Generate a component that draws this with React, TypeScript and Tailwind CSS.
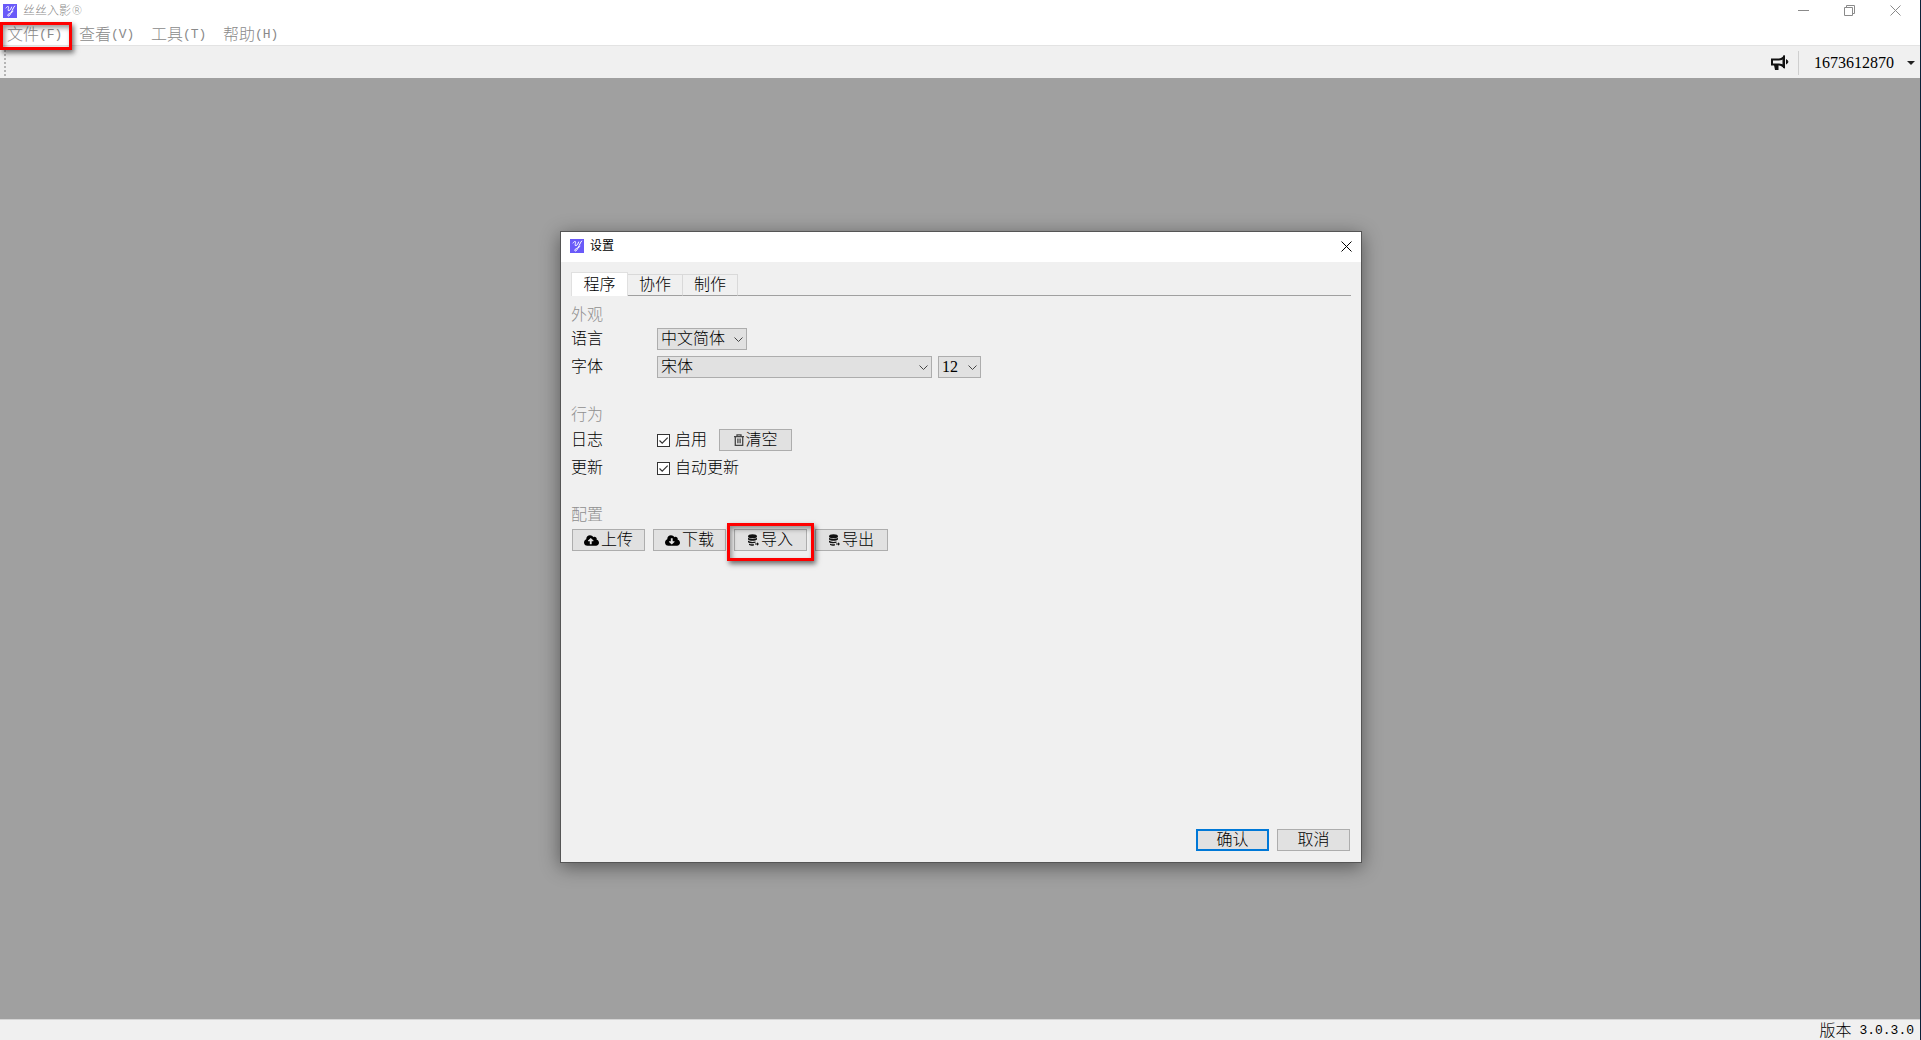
import type { ReactNode } from 'react'
import { FaCloudDownloadAlt, FaCloudUploadAlt } from 'react-icons/fa'

const menus = [
    { label: '文件', hotkey: '(F)', marked: true },
    { label: '查看', hotkey: '(V)' },
    { label: '工具', hotkey: '(T)' },
    { label: '帮助', hotkey: '(H)' },
]

function Logo() {
    return (
        <svg width="14" height="14" viewBox="0 0 14 14" fill="none" aria-hidden="true">
            <rect width="14" height="14" fill="#6a5af9" />
            <path d="M3 4C3.800 2.400 6 1.800 5.600 3.600S4.600 7 6 6.600S8 4.600 8.600 3" stroke="#fff" strokeWidth="1" strokeLinecap="round" />
            <path d="M11.600 2C9.800 4 8.300 9.500 6.400 11.600C5.200 12.700 4 11.400 5.200 10.300C6.500 9.200 8.500 8.800 10 7.400" stroke="#fff" strokeWidth="1" strokeLinecap="round" />
        </svg>
    )
}

function CloseIcon() {
    return (
        <svg width="11" height="11" viewBox="0 0 11 11" stroke="currentColor" aria-hidden="true">
            <path d="M.5.5l10 10M10.500.5l-10 10" />
        </svg>
    )
}

function Megaphone() {
    return (
        <svg width="18" height="16" viewBox="0 0 18 16" fill="none" stroke="#111" strokeWidth="2" aria-hidden="true">
            <path d="M1 4.500h7c2 0 3.500-1 4.500-2v9c-1-1-2.500-2-4.500-2H1z" />
            <path d="M3 10h4.500v5H4z" fill="#111" stroke="none" />
            <path d="M13 .5v12.500" />
            <path d="M15.500 4.700c1.800 1 1.800 3.200 0 4.200z" fill="#111" strokeWidth="1" />
        </svg>
    )
}

function Trash() {
    return (
        <svg width="10" height="12" viewBox="0 0 10 12" fill="none" stroke="#444" strokeWidth="1.300" aria-hidden="true">
            <path d="M0 2.600h10M3 2.500V.8h4v1.700M1.300 2.600v8.700h7.400V2.600M3.900 4.600v4.600M6.100 4.600v4.600" />
        </svg>
    )
}

function Database() {
    return (
        <svg width="11" height="12" viewBox="0 0 11 12" fill="#111" aria-hidden="true">
            <ellipse cx="4.500" cy="2.200" rx="4.500" ry="2" />
            <path d="M0 3.800c1.500 1.500 7.500 1.500 9 0v1.700c-1.500 1.700-7.500 1.700-9 0zM0 6.600c1.500 1.500 5.500 1.600 7.500.8v1.400c-2 .8-6 .6-7.500-.5zM1 9.400c1.200.8 3.500 1 5 .8v1.400c-2 .2-4-.1-5-.9z" />
            <path d="M7 9.500h2V8.300l2 1.800-2 1.700v-1.200H7z" />
        </svg>
    )
}

function PushButton({ icon, children, primary }: { icon?: ReactNode; children: ReactNode; primary?: boolean }) {
    return (
        <button
            className={
                primary
                    ? 'flex h-[22px] w-[73px] items-center justify-center border-2 border-[#0078d7] bg-[#e1e1e1]'
                    : 'flex h-[22px] w-[73px] items-center justify-center gap-[2px] border border-[#adadad] bg-[#e1e1e1]'
            }
        >
            {icon}
            {children}
        </button>
    )
}

function Select({ id, label, options, className }: { id: string; label: string; options: string[]; className: string }) {
    return (
        <div className={`relative ${className}`}>
            <select id={id} aria-label={label} className="h-[22px] w-full appearance-none border border-[#adadad] bg-[#e1e1e1] pl-[3px] leading-5">
                {options.map((option) => (
                    <option key={option}>{option}</option>
                ))}
            </select>
            <svg className="pointer-events-none absolute top-[9px] right-1" width="9" height="6" viewBox="0 0 9 6" fill="none" stroke="#444" aria-hidden="true">
                <path d="M.5.5l4 4 4-4" />
            </svg>
        </div>
    )
}

function Check({ label }: { label: string }) {
    return (
        <label className="flex items-center gap-[5px]">
            <span className="relative flex">
                <input type="checkbox" defaultChecked className="peer size-[13px] appearance-none border border-[#333] bg-white" />
                <svg className="pointer-events-none absolute inset-0 hidden peer-checked:block" width="13" height="13" viewBox="0 0 13 13" fill="none" stroke="#333" aria-hidden="true">
                    <path d="M2.500 6.500l2.700 2.700 5.500-5.500" strokeWidth="1.200" />
                </svg>
            </span>
            {label}
        </label>
    )
}

function SettingsDialog() {
    return (
        <section role="dialog" aria-label="设置" className="flex min-h-[632px] w-[802px] flex-col border border-[#555] bg-[#f0f0f0] shadow-[0_4px_18px_rgba(0,0,0,0.45)]">
            <header className="flex h-[30px] items-center bg-white px-[9px] pb-[2px] text-xs">
                <Logo />
                <h2 className="ml-[6px] flex-1 font-normal">设置</h2>
                <button aria-label="关闭">
                    <CloseIcon />
                </button>
            </header>

            <div className="flex flex-1 flex-col px-[10px] pt-[10px] pb-[11px]">
                <div role="tablist" className="flex h-6 items-end">
                    <button role="tab" aria-selected="true" className="h-6 w-[57px] border border-b-0 border-[#e0e0e0] bg-white">程序</button>
                    <button role="tab" className="h-[22px] w-[55px] border-t border-r border-b border-[#d9d9d9] border-b-[#a0a0a0]">协作</button>
                    <button role="tab" className="h-[22px] w-[55px] border-t border-r border-b border-[#d9d9d9] border-b-[#a0a0a0]">制作</button>
                    <span className="flex-1 border-b border-[#a0a0a0]" />
                </div>

                <h3 className="mt-[6px] leading-[26px] text-[#8f8f8f]">外观</h3>
                <div className="flex h-[22px] items-center">
                    <label htmlFor="language" className="w-[86px]">语言</label>
                    <Select id="language" label="语言" options={['中文简体']} className="w-[90px]" />
                </div>
                <div className="mt-[6px] flex h-[22px] items-center">
                    <label htmlFor="font" className="w-[86px]">字体</label>
                    <Select id="font" label="字体" options={['宋体']} className="w-[275px]" />
                    <Select id="size" label="字号" options={['12']} className="ml-[6px] w-[43px]" />
                </div>

                <h3 className="mt-6 mb-px leading-[26px] text-[#8f8f8f]">行为</h3>
                <div className="flex h-[22px] items-center">
                    <span className="w-[86px]">日志</span>
                    <Check label="启用" />
                    <span className="ml-3">
                        <PushButton icon={<Trash />}>清空</PushButton>
                    </span>
                </div>
                <div className="mt-[6px] flex h-[22px] items-center">
                    <span className="w-[86px]">更新</span>
                    <Check label="自动更新" />
                </div>

                <h3 className="mt-[23px] mb-px leading-[26px] text-[#8f8f8f]">配置</h3>
                <div className="ml-px flex gap-2">
                    <PushButton icon={<FaCloudUploadAlt size={15} />}>上传</PushButton>
                    <PushButton icon={<FaCloudDownloadAlt size={15} />}>下载</PushButton>
                    <div className="relative z-10">
                        <PushButton icon={<Database />}>导入</PushButton>
                        <span className="pointer-events-none absolute -inset-x-[7px] -top-[6px] -bottom-[10px] border-3 border-[#fe0000] shadow-[2px_3px_5px_rgba(0,0,0,0.55),inset_2px_3px_5px_rgba(0,0,0,0.4)]" />
                    </div>
                    <PushButton icon={<Database />}>导出</PushButton>
                </div>

                <footer className="mt-auto flex justify-end gap-2 pr-px">
                    <PushButton primary>确认</PushButton>
                    <PushButton>取消</PushButton>
                </footer>
            </div>
        </section>
    )
}

export default function App() {
    return (
        <div className="flex min-h-screen flex-col border-r border-[#0c2138] bg-[#a0a0a0] font-['Liberation_Serif','Noto_Sans_CJK_SC',serif] text-base leading-5 font-light text-black">
            <header className="bg-white text-[#8a8a8a]">
                <div className="flex h-[22px] items-center pr-[2px] pb-px pl-[3px] text-xs">
                    <Logo />
                    <h1 className="ml-[6px] flex-1">
                        丝丝入影<span className="font-['DejaVu_Sans',sans-serif]">®</span>
                    </h1>
                    <button aria-label="最小化" className="flex w-[46px] justify-center">
                        <svg width="11" height="11" stroke="currentColor"><path d="M0 5.500h11" /></svg>
                    </button>
                    <button aria-label="还原" className="flex w-[46px] justify-center">
                        <svg width="11" height="11" fill="none" stroke="currentColor"><path d="M.5 2.500h8v8h-8zM2.500 2.500v-2h8v8h-2" /></svg>
                    </button>
                    <button aria-label="关闭" className="flex w-[46px] justify-center">
                        <CloseIcon />
                    </button>
                </div>
                <nav className="flex h-[23px] items-center pt-[2px]">
                    {menus.map((menu) => (
                        <button key={menu.label} className="relative flex w-[72px] items-center pl-[7px]">
                            {menu.label}
                            <span className="font-['Liberation_Mono',monospace] text-[13px]">{menu.hotkey}</span>
                            {menu.marked && (
                                <span className="pointer-events-none absolute inset-x-0 -top-[3px] h-7 border-3 border-[#fe0000] shadow-[2px_3px_5px_rgba(0,0,0,0.55),inset_2px_3px_5px_rgba(0,0,0,0.4)]" />
                            )}
                        </button>
                    ))}
                </nav>
            </header>

            <div className="flex h-[33px] items-center justify-end border-t border-[#e3e3e3] bg-[#f0f0f0] pt-[2px] pr-[5px]">
                <span className="mr-auto ml-1 h-[26px] border-l-2 border-dotted border-[#b4b4b4]" />
                <button aria-label="公告">
                    <Megaphone />
                </button>
                <span className="ml-[9px] h-6 border-l border-[#cfcfcf]" />
                <button className="ml-[15px] flex items-center gap-[13px]">
                    1673612870
                    <svg width="8" height="4" fill="#222" aria-hidden="true"><path d="M0 0h8L4 4z" /></svg>
                </button>
            </div>

            <main className="flex flex-1 items-center justify-center pb-[3px] pl-[2px]">
                <SettingsDialog />
            </main>

            <footer className="flex h-[21px] items-center justify-end gap-2 border-t border-[#d4d4d4] bg-[#f0f0f0] pt-px pr-[6px]">
                版本
                <span className="font-['Liberation_Mono',monospace] text-[13px]">3.0.3.0</span>
            </footer>
        </div>
    )
}
